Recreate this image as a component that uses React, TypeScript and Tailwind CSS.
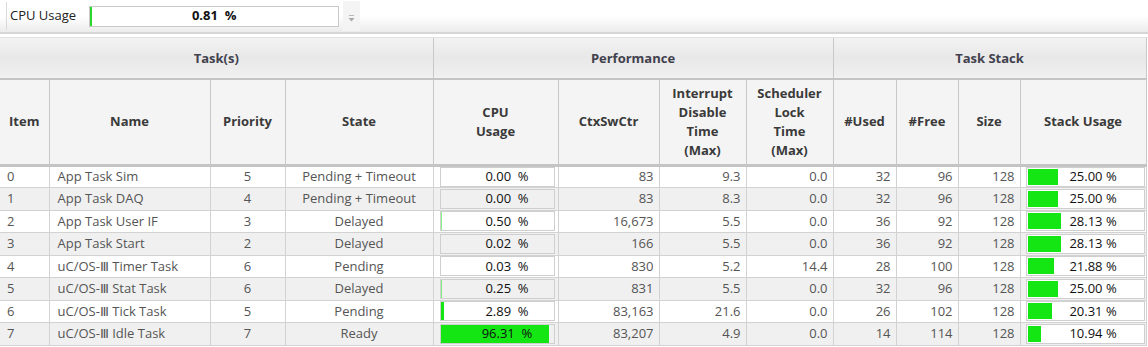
import React from 'react'

type Task = {
  item: number
  name: string
  prio: number
  state: string
  cpu: number
  ctx: string
  irq: string
  sched: string
  used: number
  free: number
  size: number
  stack: number
}

const tasks: Task[] = [
  { item: 0, name: 'App Task Sim', prio: 5, state: 'Pending + Timeout', cpu: 0.0, ctx: '83', irq: '9.3', sched: '0.0', used: 32, free: 96, size: 128, stack: 25.0 },
  { item: 1, name: 'App Task DAQ', prio: 4, state: 'Pending + Timeout', cpu: 0.0, ctx: '83', irq: '8.3', sched: '0.0', used: 32, free: 96, size: 128, stack: 25.0 },
  { item: 2, name: 'App Task User IF', prio: 3, state: 'Delayed', cpu: 0.5, ctx: '16,673', irq: '5.5', sched: '0.0', used: 36, free: 92, size: 128, stack: 28.13 },
  { item: 3, name: 'App Task Start', prio: 2, state: 'Delayed', cpu: 0.02, ctx: '166', irq: '5.5', sched: '0.0', used: 36, free: 92, size: 128, stack: 28.13 },
  { item: 4, name: 'uC/OS-Ⅲ Timer Task', prio: 6, state: 'Pending', cpu: 0.03, ctx: '830', irq: '5.2', sched: '14.4', used: 28, free: 100, size: 128, stack: 21.88 },
  { item: 5, name: 'uC/OS-Ⅲ Stat Task', prio: 6, state: 'Delayed', cpu: 0.25, ctx: '831', irq: '5.5', sched: '0.0', used: 32, free: 96, size: 128, stack: 25.0 },
  { item: 6, name: 'uC/OS-Ⅲ Tick Task', prio: 5, state: 'Pending', cpu: 2.89, ctx: '83,163', irq: '21.6', sched: '0.0', used: 26, free: 102, size: 128, stack: 20.31 },
  { item: 7, name: 'uC/OS-Ⅲ Idle Task', prio: 7, state: 'Ready', cpu: 96.31, ctx: '83,207', irq: '4.9', sched: '0.0', used: 14, free: 114, size: 128, stack: 10.94 },
]

const barPx = (pct: number, inner: number) => {
  if (pct < 0.1) return 0
  return Math.max(1, Math.round((pct / 100) * inner))
}

const CpuBox: React.FC<{ pct: number }> = ({ pct }) => {
  const w = barPx(pct, 112)
  return (
    <div className="relative ml-[6px] mr-[3px] h-[20px] border border-[#cfcfcf]">
      <div className="absolute left-0 top-0 h-full bg-[#14e614]" style={{ width: w, opacity: w <= 1 ? 0.5 : 1 }} />
      <div className="relative flex h-full items-center justify-center pl-5 text-[13px] text-[#111]">
        {pct.toFixed(2)}&nbsp;&nbsp;%
      </div>
    </div>
  )
}

const StackBox: React.FC<{ pct: number }> = ({ pct }) => {
  const w = barPx(pct, 118)
  return (
    <div className="relative ml-[5px] mr-[1px] h-[20px] border border-[#cfcfcf] bg-white">
      <div className="absolute left-[1px] top-[1px] bottom-[1px] bg-[#14e614]" style={{ width: w }} />
      <div className="relative flex h-full items-center justify-center pl-4 text-[13px] text-[#111]">
        {pct.toFixed(2)} %
      </div>
    </div>
  )
}

const cols = [49, 161, 75, 148, 125, 101, 87, 87, 63, 62, 62, 126]

const App: React.FC = () => {
  const th = 'border-r border-[#c8c8c8] px-1 text-center align-middle text-[13px] font-bold leading-[19px] text-[#3a3a3a]'
  const td = 'border-r border-b border-[#d2d2d2] text-[13px] text-[#555] whitespace-nowrap'

  return (
    <div className="h-[347px] w-[1148px] overflow-hidden bg-white" style={{ fontFamily: '"Open Sans", "Noto Sans", sans-serif' }}>
      {/* toolbar */}
      <div className="flex h-[34px] items-center border-b-2 border-[#d6d6d6] bg-gradient-to-b from-white via-white to-[#ececec]">
        <div className="ml-[6px] h-[28px] w-px bg-[#d9d9d9]" />
        <span className="ml-[3px] text-[13px] text-[#222]">CPU Usage</span>
        <div className="relative ml-[13px] h-[21px] w-[250px] border border-[#c9c9c9] bg-white">
          <div className="absolute left-0 top-0 h-full w-[2px] bg-[#2ad82a]" />
          <div className="flex h-full items-center justify-center text-[13px] font-bold text-[#111]">0.81&nbsp;&nbsp;%</div>
        </div>
        <div className="ml-[4px] flex h-[30px] w-[17px] items-center justify-center bg-[#f4f4f4]">
          <svg width="9" height="8" viewBox="0 0 9 8" className="mt-[6px]">
            <rect x="2" y="0" width="5" height="1" fill="#b8b8b8" />
            <path d="M1.5 3 L7.5 3 L4.5 6.5 Z" fill="#a8a8a8" />
          </svg>
        </div>
      </div>

      <div className="mt-[3px] border-t border-[#e2e2e2]">
        <table className="table-fixed border-collapse" style={{ width: 1146 }}>
          <colgroup>
            {cols.map((w, i) => (
              <col key={i} style={{ width: w }} />
            ))}
          </colgroup>
          <thead>
            <tr className="h-[41px] border-b-2 border-[#c4c4c4] bg-gradient-to-b from-[#f3f3f3] via-[#e8e8e8] to-[#f0f0f0]">
              <th colSpan={4} className={`${th} text-[#41414d]`}>Task(s)</th>
              <th colSpan={4} className={`${th} text-[#41414d]`}>Performance</th>
              <th colSpan={4} className={`${th} text-[#41414d]`}>Task Stack</th>
            </tr>
            <tr className="h-[86px] border-b-[3px] border-[#c4c4c4] bg-[#f4f4f4]">
              <th className={th}>Item</th>
              <th className={th}>Name</th>
              <th className={th}>Priority</th>
              <th className={th}>State</th>
              <th className={th}>CPU<br />Usage</th>
              <th className={th}>CtxSwCtr</th>
              <th className={th}>Interrupt<br />Disable<br />Time<br />(Max)</th>
              <th className={th}>Scheduler<br />Lock<br />Time<br />(Max)</th>
              <th className={th}>#Used</th>
              <th className={th}>#Free</th>
              <th className={th}>Size</th>
              <th className={th}>Stack Usage</th>
            </tr>
          </thead>
          <tbody>
            {tasks.map((t) => (
              <tr key={t.item} className={`h-[22.5px] ${t.item % 2 ? 'bg-[#f0f0f0]' : 'bg-white'}`}>
                <td className={`${td} pl-[7px]`}>{t.item}</td>
                <td className={`${td} pl-[8px]`}>{t.name}</td>
                <td className={`${td} text-center`}>{t.prio}</td>
                <td className={`${td} text-center`}>{t.state}</td>
                <td className={td}>
                  <CpuBox pct={t.cpu} />
                </td>
                <td className={`${td} pr-[5px] text-right`}>{t.ctx}</td>
                <td className={`${td} pr-[5px] text-right`}>{t.irq}</td>
                <td className={`${td} pr-[5px] text-right`}>{t.sched}</td>
                <td className={`${td} pr-[5px] text-right`}>{t.used}</td>
                <td className={`${td} pr-[5px] text-right`}>{t.free}</td>
                <td className={`${td} pr-[5px] text-right`}>{t.size}</td>
                <td className={td}>
                  <StackBox pct={t.stack} />
                </td>
              </tr>
            ))}
          </tbody>
        </table>
      </div>
    </div>
  )
}

export default App
